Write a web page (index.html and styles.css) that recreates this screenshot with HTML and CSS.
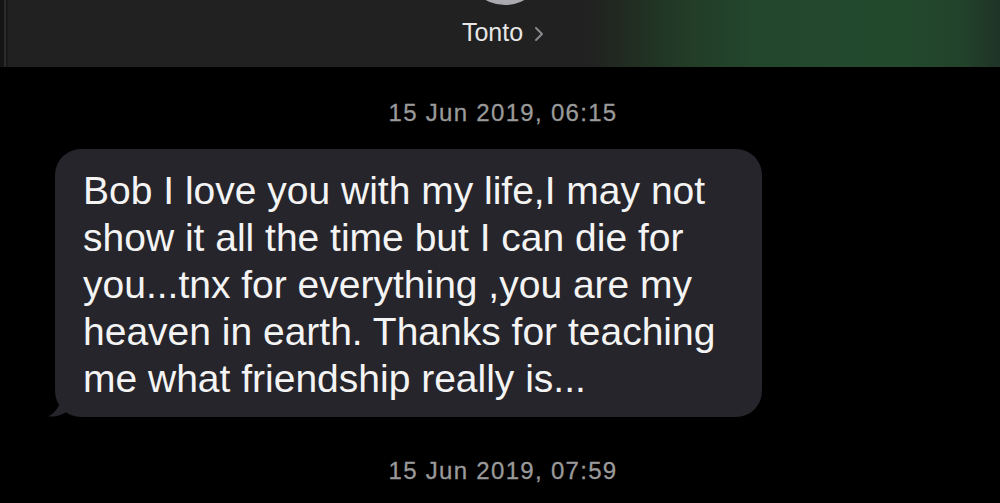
FILE: index.html
```html
<!DOCTYPE html>
<html lang="en">
<head>
    <meta charset="UTF-8">
    <meta name="viewport" content="width=device-width, initial-scale=1.0">
    <title>Tonto</title>
    <link rel="stylesheet" href="styles.css">
</head>
<body>
    <div class="header">
        <div class="avatar"></div>
        <div class="contact">
            Tonto
            <svg class="chevron" width="10" height="16" viewBox="0 0 10 16">
                <path d="M2 2 L8 8 L2 14" fill="none" stroke="#8a8a8e" stroke-width="2" stroke-linecap="round" stroke-linejoin="round"/>
            </svg>
        </div>
    </div>

    <div class="thread">
        <div class="stamp">15 Jun 2019, 06:15</div>
        <div class="bubble">
            Bob I love you with my life,I may not show it all the time but I can die for you...tnx for everything ,you are my heaven in earth. Thanks for teaching me what friendship really is...
            <svg class="tail" width="22" height="22" viewBox="0 0 22 22">
                <path d="M14 0 C14 9 10 17 1 21.5 C9 22 16 20 22 15 L22 0 Z" fill="#26252b"/>
            </svg>
        </div>
        <div class="stamp stamp-next">15 Jun 2019, 07:59</div>
    </div>
</body>
</html>
```

FILE: styles.css
```css
body {
    margin: 0;
    padding: 0;
    background-color: #000;
    color: #fff;
    font-family: "Liberation Sans", Arial, sans-serif;
    overflow: hidden;
}

.header {
    height: 67px;
    display: flex;
    flex-direction: column;
    align-items: center;
    overflow: hidden;
    background:
        linear-gradient(90deg, #151515 0, #151515 4px, #2b2b2b 4px, #2b2b2b 6px, #191919 6px, #191919 8px, transparent 8px),
        linear-gradient(90deg, #212121 0%, #212121 59%, #212d21 63%, #223b27 68%, #23472d 76%, #23492d 90%, #22432b 96%, #1f3326 100%);
}

.avatar {
    width: 80px;
    height: 80px;
    border-radius: 50%;
    margin-top: -75px;
    margin-left: 10px;
    background: linear-gradient(180deg, #d0d0d4, #a8a8ae);
}

.contact {
    display: flex;
    align-items: center;
    gap: 11px;
    margin-top: 13px;
    margin-left: 6px;
    font-size: 25px;
    line-height: 28px;
    color: #e6e6e6;
}

.chevron {
    margin-top: 3px;
}

.thread {
    padding-top: 32px;
}

.stamp {
    text-align: center;
    font-size: 24px;
    line-height: 27px;
    letter-spacing: 1.3px;
    color: #9a9a9a;
    padding-left: 6px;
    -webkit-text-stroke: 0.3px #9a9a9a;
}

.stamp-next {
    margin-top: 40px;
}

.bubble {
    position: relative;
    box-sizing: border-box;
    width: 707px;
    margin: 23px 0 0 55px;
    padding: 18px 20px 15px 28px;
    background-color: #26252b;
    border-radius: 26px;
    font-size: 39px;
    line-height: 47px;
    color: #f4f4f4;
}

.tail {
    position: absolute;
    left: -8px;
    bottom: 0;
}
```
